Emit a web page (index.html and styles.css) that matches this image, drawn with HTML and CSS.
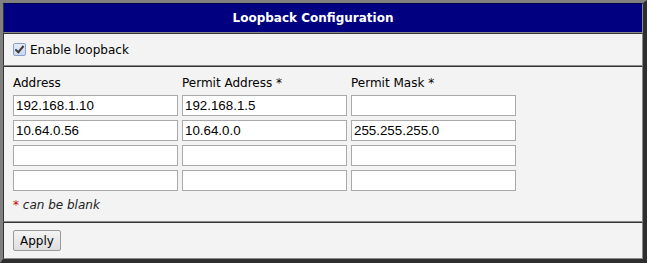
FILE: index.html
```html
<!DOCTYPE html>
<html lang="en">
<head>
    <meta charset="UTF-8">
    <title>Loopback Configuration</title>
    <link rel="stylesheet" href="styles.css">
</head>
<body>
    <form class="panel">
        <div class="section header">Loopback Configuration</div>

        <div class="section enable-row">
            <label class="check-label">
                <input type="checkbox" class="check" checked>
                <span>Enable loopback</span>
            </label>
        </div>

        <div class="section content">
            <div class="grid">
                <div class="col-label">Address</div>
                <div class="col-label">Permit Address *</div>
                <div class="col-label">Permit Mask *</div>

                <input type="text" class="field" value="192.168.1.10">
                <input type="text" class="field" value="192.168.1.5">
                <input type="text" class="field" value="">

                <input type="text" class="field" value="10.64.0.56">
                <input type="text" class="field" value="10.64.0.0">
                <input type="text" class="field" value="255.255.255.0">

                <input type="text" class="field" value="">
                <input type="text" class="field" value="">
                <input type="text" class="field" value="">

                <input type="text" class="field" value="">
                <input type="text" class="field" value="">
                <input type="text" class="field" value="">
            </div>
            <div class="hint"><span class="star">*</span> can be blank</div>
        </div>

        <div class="section actions">
            <button type="button" class="btn">Apply</button>
        </div>
    </form>
</body>
</html>
```

FILE: styles.css
```css
body {
    margin: 0;
    background-color: #ffffff;
    font-family: 'DejaVu Sans', Verdana, sans-serif;
    font-size: 12px;
    color: #000;
}

.panel {
    width: 647px;
    box-sizing: border-box;
    margin: 0;
    background-color: #f3f3f3;
    border-style: solid;
    border-width: 3px 4px 4px 3px;
    border-color: #808080 #2e2e2e #2e2e2e #808080;
}

.section {
    border: 1px solid;
    border-color: #333 #8a8a8a #8a8a8a #333;
}

.header {
    height: 28px;
    line-height: 28px;
    background-color: #000080;
    color: #fff;
    font-weight: bold;
    text-align: center;
    padding-right: 20px;
    border-color: #000050 #8a8a8a #8a8a8a #333;
}

.enable-row {
    height: 31px;
    display: flex;
    align-items: center;
    padding-left: 9px;
}

.check-label {
    display: flex;
    align-items: center;
    gap: 4px;
}

.check {
    appearance: none;
    -webkit-appearance: none;
    width: 13px;
    height: 13px;
    margin: 0;
    border: 1px solid #8aa0c6;
    border-radius: 2px;
    background: linear-gradient(#e4ecf8, #c9d8ef);
    position: relative;
}

.check:checked::after {
    content: '';
    position: absolute;
    left: 3px;
    top: 0px;
    width: 3px;
    height: 7px;
    border: solid #3c3c3c;
    border-width: 0 2px 2px 0;
    transform: rotate(40deg);
}

.content {
    padding: 8px 9px 8px 9px;
}

.grid {
    display: grid;
    grid-template-columns: 165px 165px 165px;
    column-gap: 4px;
    row-gap: 4px;
}

.col-label {
    height: 16px;
    line-height: 16px;
}

.field {
    box-sizing: border-box;
    height: 21px;
    width: 165px;
    margin: 0;
    padding: 1px 2px;
    border: 1px solid #a9a9a9;
    background-color: #fff;
    font-family: 'Liberation Sans', Arial, sans-serif;
    font-size: 13.33px;
    color: #000;
}

.hint {
    margin-top: 6px;
    height: 16px;
    line-height: 16px;
    font-style: italic;
    color: #222;
}

.star {
    color: #cc0000;
}

.actions {
    height: 35px;
    display: flex;
    align-items: center;
    padding-left: 9px;
}

.btn {
    box-sizing: border-box;
    height: 21px;
    width: 48px;
    padding: 0;
    border: 1px solid #9a9a9a;
    border-radius: 2px;
    background: linear-gradient(#f4f4f4, #dedede);
    font-family: 'DejaVu Sans', Verdana, sans-serif;
    font-size: 12px;
    color: #000;
    cursor: pointer;
}
```
